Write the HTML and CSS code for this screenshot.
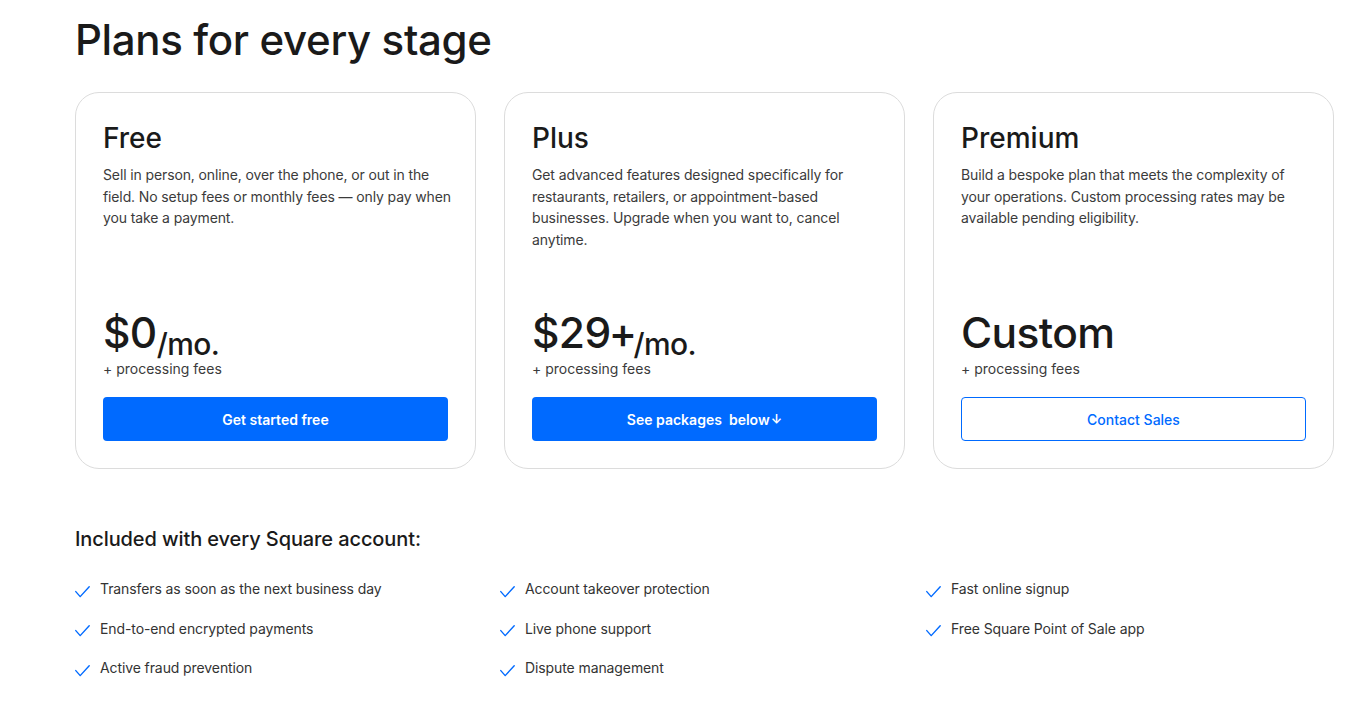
FILE: index.html
```html
<!DOCTYPE html>
<html lang="en">
<head>
<meta charset="utf-8">
<title>Plans for every stage</title>
<link rel="stylesheet" href="styles.css">
</head>
<body>
<main class="page">
  <h1 class="page-title">Plans for every stage</h1>
  <section class="plans">
    <article class="plan">
      <h2 class="plan-name">Free</h2>
      <p class="plan-desc">Sell in person, online, over the phone, or out in the field. No setup fees or monthly fees — only pay when you take a payment.</p>
      <div class="plan-price">
        <div class="price"><span class="amount">$0</span><span class="per">/mo.</span></div>
        <div class="fees">+ processing fees</div>
      </div>
      <a class="btn btn-primary" href="#">Get started free</a>
    </article>
    <article class="plan">
      <h2 class="plan-name">Plus</h2>
      <p class="plan-desc">Get advanced features designed specifically for restaurants, retailers, or appointment-based businesses. Upgrade when you want to, cancel anytime.</p>
      <div class="plan-price">
        <div class="price"><span class="amount">$29<span class="plus">+</span></span><span class="per">/mo.</span></div>
        <div class="fees">+ processing fees</div>
      </div>
      <a class="btn btn-primary" href="#">See packages&nbsp; below<span class="arrow">↓</span></a>
    </article>
    <article class="plan">
      <h2 class="plan-name">Premium</h2>
      <p class="plan-desc">Build a bespoke plan that meets the complexity of your operations. Custom processing rates may be available pending eligibility.</p>
      <div class="plan-price">
        <div class="price"><span class="amount">Custom</span></div>
        <div class="fees">+ processing fees</div>
      </div>
      <a class="btn btn-outline" href="#">Contact Sales</a>
    </article>
  </section>

  <section class="included">
    <h3 class="included-title">Included with every Square account:</h3>
    <ul class="features">
      <li><svg class="check" viewBox="0 0 15 12"><path d="M0.8 5.6 L5.2 10.6 L14.2 0.8"/></svg>Transfers as soon as the next business day</li>
      <li><svg class="check" viewBox="0 0 15 12"><path d="M0.8 5.6 L5.2 10.6 L14.2 0.8"/></svg>Account takeover protection</li>
      <li><svg class="check" viewBox="0 0 15 12"><path d="M0.8 5.6 L5.2 10.6 L14.2 0.8"/></svg>Fast online signup</li>
      <li><svg class="check" viewBox="0 0 15 12"><path d="M0.8 5.6 L5.2 10.6 L14.2 0.8"/></svg>End-to-end encrypted payments</li>
      <li><svg class="check" viewBox="0 0 15 12"><path d="M0.8 5.6 L5.2 10.6 L14.2 0.8"/></svg>Live phone support</li>
      <li><svg class="check" viewBox="0 0 15 12"><path d="M0.8 5.6 L5.2 10.6 L14.2 0.8"/></svg>Free Square Point of Sale app</li>
      <li><svg class="check" viewBox="0 0 15 12"><path d="M0.8 5.6 L5.2 10.6 L14.2 0.8"/></svg>Active fraud prevention</li>
      <li><svg class="check" viewBox="0 0 15 12"><path d="M0.8 5.6 L5.2 10.6 L14.2 0.8"/></svg>Dispute management</li>
    </ul>
  </section>
</main>
</body>
</html>
```

FILE: styles.css
```css
* {
  box-sizing: border-box;
}

html, body {
  margin: 0;
  padding: 0;
  background: #ffffff;
}

body {
  font-family: Inter, "Noto Sans", "Liberation Sans", sans-serif;
  color: #1a1a1a;
  -webkit-font-smoothing: antialiased;
}

.page {
  padding: 15px 0 0 75px;
  width: 1372px;
}

.page-title {
  margin: 0;
  font-size: 42px;
  line-height: 50px;
  font-weight: 500;
  letter-spacing: -0.35px;
  color: #1a1a1a;
}

.plans {
  margin-top: 27px;
  display: grid;
  grid-template-columns: repeat(3, 401px);
  column-gap: 28px;
  width: 1259px;
}

.plan {
  display: flex;
  flex-direction: column;
  min-height: 377px;
  border: 1px solid #dcdcdc;
  border-radius: 24px;
  padding: 27px;
}

.plan-name {
  margin: 0;
  font-size: 28px;
  line-height: 36px;
  font-weight: 500;
  color: #1a1a1a;
}

.plan-desc {
  margin: 8px -4px 0 0;
  font-size: 14px;
  line-height: 21.6px;
  letter-spacing: -0.12px;
  color: #3b3b3b;
  font-weight: 400;
}

.plan-price {
  margin-top: auto;
}

.price {
  display: flex;
  align-items: baseline;
  font-weight: 500;
  color: #1a1a1a;
  height: 48px;
}

.amount {
  font-size: 42.5px;
  line-height: 48px;
  letter-spacing: -0.6px;
}

.plus {
  margin-left: -2px;
  margin-right: -3px;
}

.per {
  font-size: 30px;
  line-height: 30px;
  position: relative;
  top: 7px;
  letter-spacing: -0.6px;
}

.fees {
  margin-top: 2px;
  font-size: 14px;
  line-height: 20px;
  color: #3b3b3b;
}

.btn {
  margin-top: 18px;
  display: flex;
  align-items: center;
  justify-content: center;
  height: 44px;
  border-radius: 4px;
  font-size: 14px;
  font-weight: 600;
  text-decoration: none;
}

.btn-primary {
  background: #006aff;
  color: #ffffff;
}

.btn-outline {
  border: 1px solid #006aff;
  color: #006aff;
  font-weight: 500;
  background: #ffffff;
}

.arrow {
  margin-left: 1px;
  font-size: 13px;
}

.included {
  margin-top: 56px;
}

.included-title {
  margin: 0;
  font-size: 20px;
  line-height: 28px;
  font-weight: 500;
  letter-spacing: -0.1px;
  color: #1a1a1a;
}

.features {
  list-style: none;
  margin: 26px 0 0;
  padding: 0;
  display: grid;
  grid-template-columns: 425px 426px 300px;
  row-gap: 19.5px;
}

.features li {
  display: flex;
  align-items: center;
  font-size: 14px;
  line-height: 20px;
  letter-spacing: -0.1px;
  color: #333333;
}

.check {
  width: 15px;
  height: 12px;
  margin: 5px 10px 0 0;
  flex: none;
  fill: none;
  stroke: #006aff;
  stroke-width: 1.4;
  stroke-linecap: round;
  stroke-linejoin: round;
}
```
